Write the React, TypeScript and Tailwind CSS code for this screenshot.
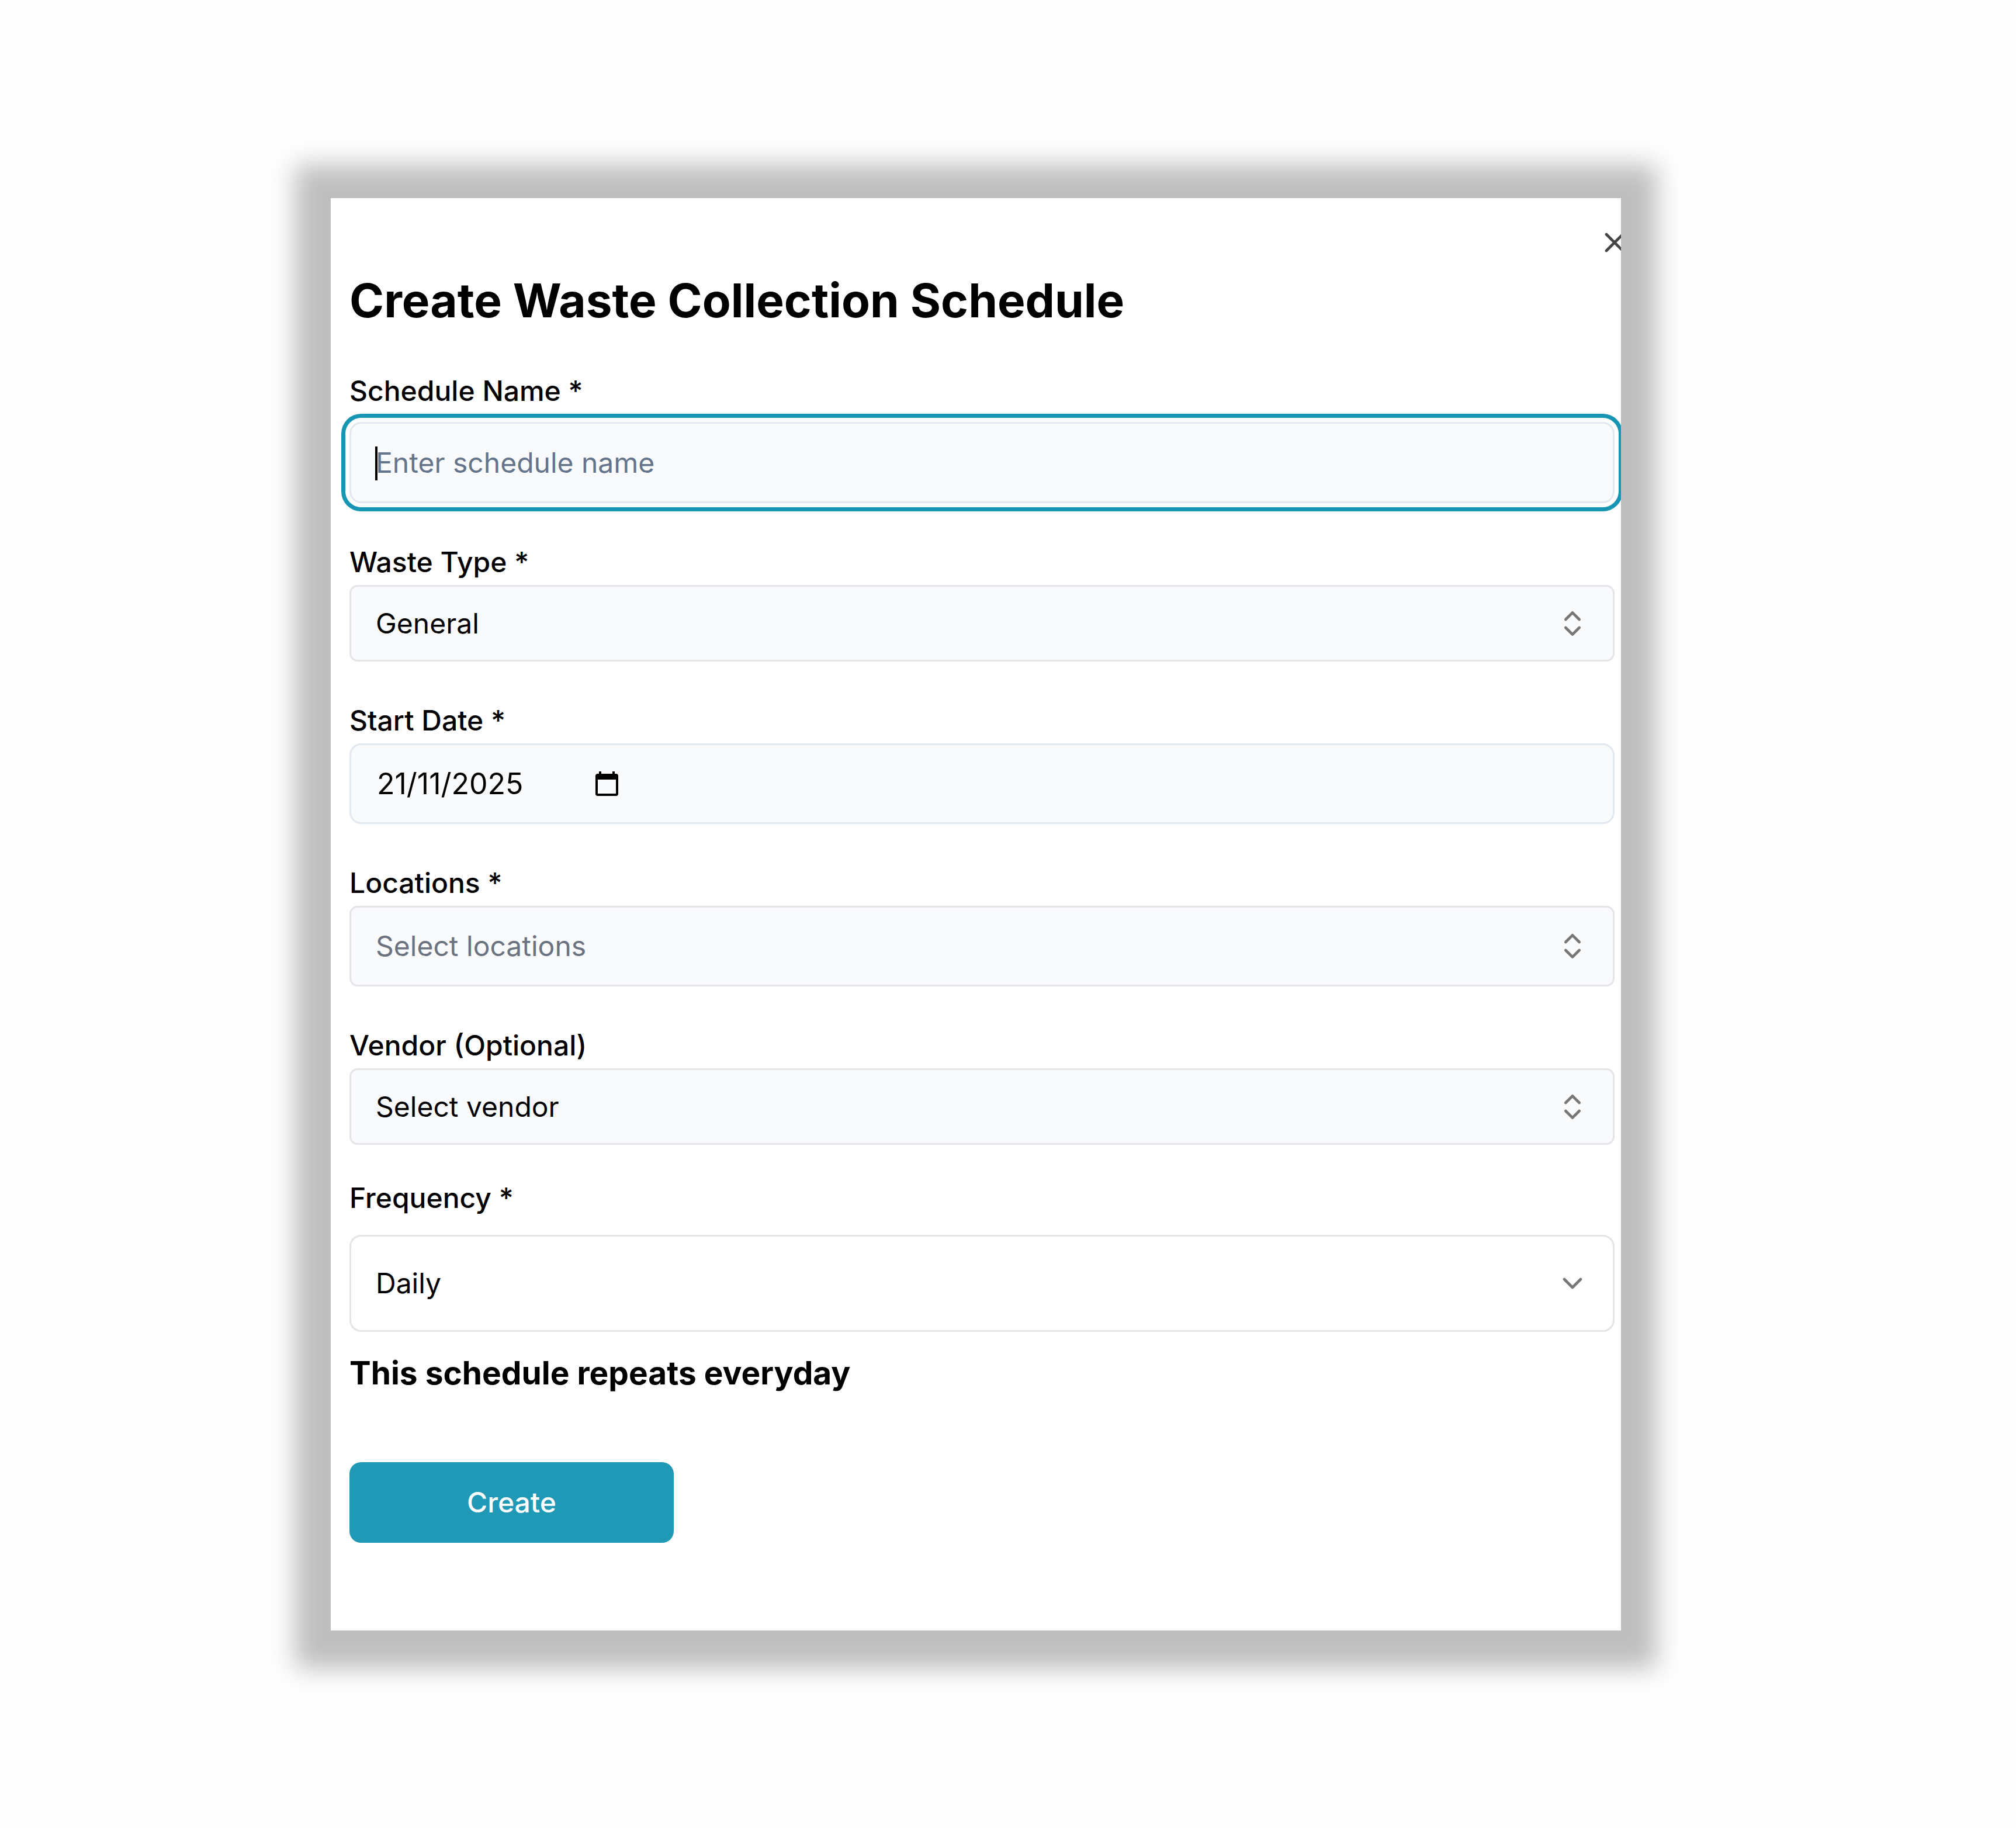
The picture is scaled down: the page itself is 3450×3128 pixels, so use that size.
import { useState } from "react";
import type { ReactNode } from "react";
import { ChevronDown, ChevronsUpDown, X } from "lucide-react";

const labelClass = "block text-[48px] leading-[64px] font-medium";
const selectClass =
  "block w-full appearance-none border-[3px] border-[#e4e4e9] pr-[120px] pl-[42px] text-[48px] leading-[64px] outline-none";

function Field({ id, label, className, children }: { id: string; label: string; className: string; children: ReactNode }) {
  return (
    <div className={className}>
      <label htmlFor={id} className={labelClass}>
        {label}
      </label>
      {children}
    </div>
  );
}

function CalendarIcon() {
  return (
    <svg viewBox="0 0 39 42" className="h-[42px] w-[39px]" aria-hidden="true">
      <path
        fill="currentColor"
        fillRule="evenodd"
        d="M6 0h4v4h19V0h4v4h2a4 4 0 0 1 4 4v30a4 4 0 0 1-4 4H4a4 4 0 0 1-4-4V8a4 4 0 0 1 4-4h2zM4 14v24h31V14z"
      />
    </svg>
  );
}

export default function App() {
  const [name, setName] = useState("");
  const [date, setDate] = useState("21/11/2025");

  return (
    <main className="min-h-screen bg-[#fefefe] pt-[339px] pr-[676px] pb-[338px] pl-[566px] font-[Inter,sans-serif] text-black">
      <section
        role="dialog"
        aria-labelledby="dialog-title"
        className="shadow-[0_4px_40px_61px_rgba(0,0,0,0.25)]"
      >
        <div className="relative overflow-hidden bg-white pt-[127px] pr-[11px] pb-[150px] pl-[32px]">
          <button type="button" aria-label="Close" className="absolute top-[48px] right-[-17px] text-[#444444]">
            <X size={56} />
          </button>

          <h1 id="dialog-title" className="text-[80px] leading-[96px] font-bold">
            Create Waste Collection Schedule
          </h1>

          <form onSubmit={(e) => e.preventDefault()}>
            <Field id="name" label="Schedule Name *" className="mt-[75px]">
              <div className="relative mt-[21px]">
                <input
                  id="name"
                  type="text"
                  value={name}
                  onChange={(e) => setName(e.target.value)}
                  placeholder="Enter schedule name"
                  className="block h-[139px] w-full rounded-[20px] border-[3px] border-[#e2e8f0] bg-[#f9fafc] px-[42px] text-[48px] leading-[64px] ring-[7px] ring-[#1796b4] ring-offset-[7px] ring-offset-white outline-none placeholder:text-[#64748b]"
                />
                <span aria-hidden="true" className="absolute top-[42px] left-[44px] h-[58px] w-[4px] bg-black" />
              </div>
            </Field>

            <Field id="type" label="Waste Type *" className="mt-[69px]">
              <div className="relative mt-[7px]">
                <select id="type" defaultValue="General" className={`${selectClass} h-[131px] rounded-[14px] bg-[#f9fafc]`}>
                  <option>General</option>
                </select>
                <ChevronsUpDown size={56} className="pointer-events-none absolute inset-y-0 right-[44px] my-auto text-[#777777]" />
              </div>
            </Field>

            <Field id="date" label="Start Date *" className="mt-[69px]">
              <div className="mt-[7px] flex h-[138px] items-center rounded-[20px] border-[3px] border-[#e2e8f0] bg-[#f9fafc] px-[44px]">
                <input
                  id="date"
                  type="text"
                  value={date}
                  onChange={(e) => setDate(e.target.value)}
                  className="w-[374px] bg-transparent text-[50px] leading-[64px] outline-none"
                />
                <button type="button" aria-label="Open calendar">
                  <CalendarIcon />
                </button>
              </div>
            </Field>

            <Field id="locations" label="Locations *" className="mt-[69px]">
              <div className="relative mt-[7px]">
                <select
                  id="locations"
                  defaultValue="Select locations"
                  className={`${selectClass} h-[138px] rounded-[14px] bg-[#f9fafc] text-[#6b7280]`}
                >
                  <option>Select locations</option>
                </select>
                <ChevronsUpDown size={56} className="pointer-events-none absolute inset-y-0 right-[44px] my-auto text-[#777777]" />
              </div>
            </Field>

            <Field id="vendor" label="Vendor (Optional)" className="mt-[69px]">
              <div className="relative mt-[7px]">
                <select id="vendor" defaultValue="Select vendor" className={`${selectClass} h-[131px] rounded-[14px] bg-[#f9fafc]`}>
                  <option>Select vendor</option>
                </select>
                <ChevronsUpDown size={56} className="pointer-events-none absolute inset-y-0 right-[44px] my-auto text-[#777777]" />
              </div>
            </Field>

            <Field id="frequency" label="Frequency *" className="mt-[59px]">
              <div className="relative mt-[31px]">
                <select id="frequency" defaultValue="Daily" className={`${selectClass} h-[166px] rounded-[20px] bg-white`}>
                  <option>Daily</option>
                </select>
                <ChevronDown size={56} className="pointer-events-none absolute inset-y-0 right-[44px] my-auto text-[#777777]" />
              </div>
            </Field>

            <p className="mt-[34px] text-[55px] leading-[72px] font-bold">This schedule repeats everyday</p>

            <button
              type="submit"
              className="mt-[117px] flex h-[138px] w-[555px] items-center justify-center rounded-[20px] bg-[#2099b6] text-[48px] leading-[64px] font-medium text-white"
            >
              Create
            </button>
          </form>
        </div>
      </section>
    </main>
  );
}
